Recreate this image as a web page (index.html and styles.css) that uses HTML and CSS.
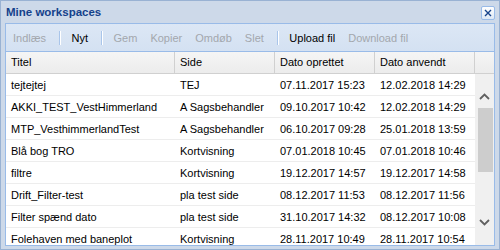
FILE: index.html
```html
<!DOCTYPE html>
<html lang="da">
<head>
<meta charset="utf-8">
<link rel="stylesheet" href="styles.css">
</head>
<body>
<div class="window">
  <div class="window-header">
    <span class="window-title">Mine workspaces</span>
    <span class="window-close">
      <svg width="8" height="8" viewBox="0 0 8 8"><path d="M1 1 L7 7 M7 1 L1 7" stroke="#15428b" stroke-width="1.4" fill="none"/></svg>
    </span>
  </div>
  <div class="panel">
    <div class="toolbar">
      <span class="tb-btn disabled">Indlæs</span>
      <span class="tb-sep"></span>
      <span class="tb-btn">Nyt</span>
      <span class="tb-sep"></span>
      <span class="tb-btn disabled">Gem</span>
      <span class="tb-btn disabled">Kopier</span>
      <span class="tb-btn disabled">Omdøb</span>
      <span class="tb-btn disabled">Slet</span>
      <span class="tb-sep"></span>
      <span class="tb-btn">Upload fil</span>
      <span class="tb-btn disabled">Download fil</span>
    </div>
    <div class="grid-head">
      <div class="hd-cell">Titel</div>
      <div class="hd-cell">Side</div>
      <div class="hd-cell">Dato oprettet</div>
      <div class="hd-cell">Dato anvendt</div>
      <div class="hd-cell hd-last"></div>
    </div>
    <div class="grid-body">
      <div class="rows">
        <div class="row"><div>tejtejtej</div><div>TEJ</div><div>07.11.2017 15:23</div><div>12.02.2018 14:29</div></div>
        <div class="row"><div>AKKI_TEST_VestHimmerland</div><div>A Sagsbehandler</div><div>09.10.2017 10:42</div><div>12.02.2018 14:29</div></div>
        <div class="row"><div>MTP_VesthimmerlandTest</div><div>A Sagsbehandler</div><div>06.10.2017 09:28</div><div>25.01.2018 13:59</div></div>
        <div class="row"><div>Blå bog TRO</div><div>Kortvisning</div><div>07.01.2018 10:45</div><div>07.01.2018 10:46</div></div>
        <div class="row"><div>filtre</div><div>Kortvisning</div><div>19.12.2017 14:57</div><div>19.12.2017 14:58</div></div>
        <div class="row"><div>Drift_Filter-test</div><div>pla test side</div><div>08.12.2017 11:53</div><div>08.12.2017 11:56</div></div>
        <div class="row"><div>Filter spænd dato</div><div>pla test side</div><div>31.10.2017 14:32</div><div>08.12.2017 10:08</div></div>
        <div class="row"><div>Folehaven med baneplot</div><div>Kortvisning</div><div>28.11.2017 10:49</div><div>28.11.2017 10:54</div></div>
      </div>
      <div class="scrollbar">
        <div class="sb-up">
          <svg width="11" height="7" viewBox="0 0 11 7"><path d="M1 6 L5.5 1.5 L10 6" stroke="#606060" stroke-width="1.8" fill="none"/></svg>
        </div>
        <div class="sb-thumb"></div>
        <div class="sb-track"></div>
        <div class="sb-down">
          <svg width="11" height="7" viewBox="0 0 11 7"><path d="M1 1 L5.5 5.5 L10 1" stroke="#606060" stroke-width="1.8" fill="none"/></svg>
        </div>
      </div>
    </div>
  </div>
</div>
</body>
</html>
```

FILE: styles.css
```css
body {
  margin: 0;
  font-family: "Liberation Sans", Arial, sans-serif;
  font-size: 11px;
}

.window {
  width: 500px;
  height: 250px;
  box-sizing: border-box;
  border: 1px solid #99b2d3;
  background-color: #cdd9e9;
  padding: 0 4px 3px 4px;
  display: flex;
  flex-direction: column;
}

.window-header {
  height: 22px;
  display: flex;
  align-items: center;
  justify-content: space-between;
  padding-left: 1px;
}

.window-title {
  font-weight: bold;
  font-size: 11.5px;
  color: #15428b;
}

.window-close {
  width: 12px;
  height: 12px;
  border: 1px solid #99bbe8;
  border-radius: 2px;
  background: linear-gradient(#ffffff, #dde8f5);
  display: flex;
  align-items: center;
  justify-content: center;
  margin-top: 2px;
}

.panel {
  flex: 1;
  border: 1px solid #99bbe8;
  background-color: #fff;
  display: flex;
  flex-direction: column;
  overflow: hidden;
}

.toolbar {
  height: 27px;
  flex: none;
  border-bottom: 1px solid #99bbe8;
  background: linear-gradient(#dce7f5, #d4e1f2);
  display: flex;
  align-items: center;
  padding-left: 0.5px;
}

.tb-btn {
  padding: 0 6.5px;
  color: #000;
  white-space: nowrap;
}

.tb-btn.disabled {
  color: #a3a7ad;
}

.tb-sep {
  width: 0;
  height: 14px;
  border-left: 1px solid #a9c5ea;
  border-right: 1px solid #fff;
  margin: 0 4px 0 6.5px;
}

.grid-head {
  height: 21px;
  flex: none;
  border-bottom: 1px solid #d0d0d0;
  background: linear-gradient(#f5f5f5, #ececec);
  display: grid;
  grid-template-columns: 169px 100px 100px 100px 1fr;
  line-height: 21px;
}

.hd-cell {
  box-sizing: border-box;
  padding: 0 5px;
  border-right: 1px solid #d0d0d0;
}

.hd-cell.hd-last {
  border-right: none;
}

.grid-body {
  flex: 1;
  display: flex;
  overflow: hidden;
}

.rows {
  width: 469px;
}

.row {
  display: grid;
  grid-template-columns: 169px 100px 100px 100px;
  height: 21px;
  line-height: 22px;
  border-bottom: 1px solid #ededed;
}

.row div {
  padding: 0 5px;
  white-space: nowrap;
  overflow: hidden;
}

.scrollbar {
  flex: 1;
  background-color: #f0f0f0;
  display: flex;
  flex-direction: column;
}

.sb-up {
  height: 34px;
  display: flex;
  align-items: flex-end;
  justify-content: center;
  padding-bottom: 0;
  box-sizing: border-box;
  padding-bottom: 8px;
}

.sb-thumb {
  height: 64px;
  margin: 0 1px 0 3px;
  background-color: #cdcdcd;
}

.sb-track {
  flex: 1;
}

.sb-down {
  height: 27px;
  display: flex;
  align-items: flex-start;
  justify-content: center;
  padding-top: 1px;
  box-sizing: border-box;
}
```
